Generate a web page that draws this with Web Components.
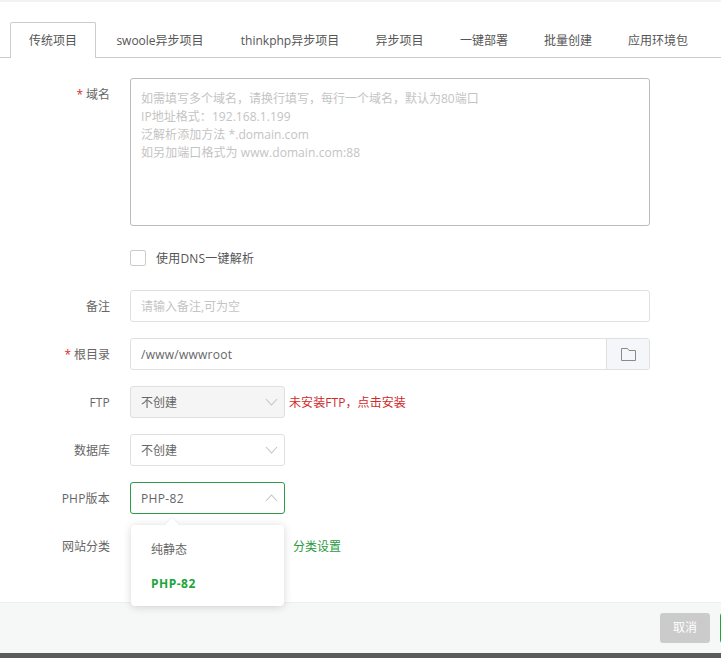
<!DOCTYPE html>
<html lang="zh">
<head>
<meta charset="utf-8">
<title>添加站点</title>
<style>
    html, body { margin: 0; height: 100%; }
    body {
        background: #fff;
        color: #666;
        font: 12px "Open Sans", "Noto Sans CJK SC", sans-serif;
        overflow: hidden;
    }
</style>
</head>
<body>
<site-dialog>
    <tab-bar>
        <tab-item active>传统项目</tab-item>
        <tab-item width="128">swoole异步项目</tab-item>
        <tab-item width="132">thinkphp异步项目</tab-item>
        <tab-item width="87">异步项目</tab-item>
        <tab-item width="82">一键部署</tab-item>
        <tab-item width="86">批量创建</tab-item>
        <tab-item width="94">应用环境包</tab-item>
    </tab-bar>
    <site-form>
        <form-row label="域名" required height="148">
            <text-area-box>
                <div>如需填写多个域名，请换行填写，每行一个域名，默认为80端口</div>
                <div style="letter-spacing:.05px">IP地址格式：192.168.1.199</div>
                <div style="letter-spacing:.05px">泛解析添加方法 *.domain.com</div>
                <div style="letter-spacing:.08px">如另加端口格式为 www.domain.com:88</div>
            </text-area-box>
        </form-row>
        <form-row height="16" gap="24"><check-box>使用DNS一键解析</check-box></form-row>
        <form-row label="备注" gap="24"><text-box placeholder>请输入备注,可为空</text-box></form-row>
        <form-row label="根目录" required gap="16"><text-box folder style="letter-spacing:.25px">/www/wwwroot</text-box></form-row>
        <form-row label="FTP" tracking gap="16">
            <select-box disabled>不创建</select-box>
            <span slot="after" style="color:#cf2a2a;margin-left:4px;letter-spacing:.08px">未安装FTP，点击安装</span>
        </form-row>
        <form-row label="数据库" gap="16"><select-box>不创建</select-box></form-row>
        <form-row label="PHP版本" tracking gap="16">
            <select-box open><span style="letter-spacing:.35px">PHP-82</span>
                <select-menu slot="menu">
                    <menu-option>纯静态</menu-option>
                    <menu-option selected>PHP-82</menu-option>
                </select-menu>
            </select-box>
        </form-row>
        <form-row label="网站分类" gap="16">
            <span style="display:block;width:155px"></span>
            <span slot="after" style="color:#2a9a42;margin-left:8px">分类设置</span>
        </form-row>
    </site-form>
    <dialog-footer slot="footer">
        <foot-button>取消</foot-button>
        <foot-button primary></foot-button>
    </dialog-footer>
</site-dialog>

<script>
class SiteDialog extends HTMLElement {
    constructor() {
        super();
        this.attachShadow({ mode: 'open' });
        this.shadowRoot.innerHTML = `
            <style>
                :host {
                    display: flex;
                    flex-direction: column;
                    width: 721px;
                    height: 658px;
                    box-sizing: border-box;
                    border-top: 2px solid #f3f3f3;
                    border-bottom: 5px solid #5a5a5a;
                }
                .body { flex: 1; min-height: 0; }
            </style>
            <div class="body"><slot></slot></div>
            <slot name="footer"></slot>
        `;
    }
}

class TabBar extends HTMLElement {
    constructor() {
        super();
        this.attachShadow({ mode: 'open' });
        this.shadowRoot.innerHTML = `
            <style>
                :host {
                    display: flex;
                    height: 35px;
                    margin-top: 20px;
                    padding-left: 10px;
                    border-bottom: 1px solid #ccc;
                }
            </style>
            <slot></slot>
        `;
    }
}

class TabItem extends HTMLElement {
    constructor() {
        super();
        this.attachShadow({ mode: 'open' });
        this.shadowRoot.innerHTML = `
            <style>
                :host {
                    display: block;
                    box-sizing: border-box;
                    flex: none;
                    height: 35px;
                    line-height: 35px;
                    text-align: center;
                    color: #555;
                    border: 1px solid transparent;
                    border-bottom: 0;
                }
                :host([active]) {
                    width: 86px;
                    height: 36px;
                    background: #fff;
                    border-color: #ccc;
                    border-radius: 2px 2px 0 0;
                }
            </style>
            <slot></slot>
        `;
    }
    connectedCallback() {
        if (this.hasAttribute('width')) this.style.width = this.getAttribute('width') + 'px';
    }
}

class SiteForm extends HTMLElement {
    constructor() {
        super();
        this.attachShadow({ mode: 'open' });
        this.shadowRoot.innerHTML = `
            <style>
                :host { display: block; padding-top: 20px; position: relative; }
            </style>
            <slot></slot>
        `;
    }
}

class FormRow extends HTMLElement {
    constructor() {
        super();
        this.attachShadow({ mode: 'open' });
        this.shadowRoot.innerHTML = `
            <style>
                :host { display: flex; align-items: flex-start; height: 32px; }
                .label {
                    flex: none;
                    box-sizing: border-box;
                    width: 110px;
                    margin-right: 20px;
                    line-height: 34px;
                    text-align: right;
                    color: #666;
                }
                .label b { color: #e0282c; font-weight: normal; margin-right: 3px; }
                .control { flex: none; }
                .after { line-height: 34px; display: block; }
            </style>
            <div class="label"></div>
            <div class="control"><slot></slot></div>
            <div class="after"><slot name="after"></slot></div>
        `;
    }
    connectedCallback() {
        const label = this.shadowRoot.querySelector('.label');
        const text = this.getAttribute('label') || '';
        label.innerHTML = (this.hasAttribute('required') ? '<b>*</b>' : '') + text;
        if (this.hasAttribute('tracking')) label.style.letterSpacing = '.2px';
        if (this.hasAttribute('height')) this.style.height = this.getAttribute('height') + 'px';
        if (this.hasAttribute('gap')) this.style.marginTop = this.getAttribute('gap') + 'px';
    }
}

class TextAreaBox extends HTMLElement {
    constructor() {
        super();
        this.attachShadow({ mode: 'open' });
        this.shadowRoot.innerHTML = `
            <style>
                :host {
                    display: block;
                    box-sizing: border-box;
                    width: 520px;
                    height: 148px;
                    padding: 11px 10px 5px;
                    border: 1px solid #bbb;
                    border-radius: 3px;
                    line-height: 18px;
                    color: #c4c4c4;
                }
            </style>
            <slot></slot>
        `;
    }
}

class CheckBox extends HTMLElement {
    constructor() {
        super();
        this.attachShadow({ mode: 'open' });
        this.shadowRoot.innerHTML = `
            <style>
                :host { display: flex; align-items: center; height: 16px; line-height: 16px; color: #555; }
                i {
                    display: block;
                    box-sizing: border-box;
                    width: 16px;
                    height: 16px;
                    margin-right: 10px;
                    border: 1px solid #ccc;
                    border-radius: 2px;
                }
                span { padding-top: 2px; letter-spacing: .2px; }
            </style>
            <i></i><span><slot></slot></span>
        `;
    }
}

class TextBox extends HTMLElement {
    constructor() {
        super();
        this.attachShadow({ mode: 'open' });
        this.shadowRoot.innerHTML = `
            <style>
                :host {
                    display: flex;
                    box-sizing: border-box;
                    width: 520px;
                    height: 32px;
                    border: 1px solid #e0e0e0;
                    border-radius: 3px;
                    line-height: 32px;
                    color: #666;
                    overflow: hidden;
                }
                :host([placeholder]) { color: #c4c4c4; }
                .text { flex: 1; padding-left: 10px; }
                .btn {
                    display: none;
                    flex: none;
                    width: 42px;
                    background: #f5f6fa;
                    border-left: 1px solid #e0e0e0;
                    align-items: center;
                    justify-content: center;
                }
                :host([folder]) .btn { display: flex; }
            </style>
            <div class="text"><slot></slot></div>
            <div class="btn">
                <svg width="15" height="13" viewBox="0 0 15 13" fill="none" stroke="#8a8a8a" stroke-width="1">
                    <path d="M.5 12.500V.5h6l1.500 2h6.500v10z"/>
                </svg>
            </div>
        `;
    }
}

class SelectBox extends HTMLElement {
    constructor() {
        super();
        this.attachShadow({ mode: 'open' });
        this.shadowRoot.innerHTML = `
            <style>
                :host {
                    display: block;
                    position: relative;
                    box-sizing: border-box;
                    width: 155px;
                    height: 32px;
                    padding-left: 10px;
                    border: 1px solid #e0e0e0;
                    border-radius: 3px;
                    line-height: 32px;
                    color: #666;
                }
                :host([disabled]) { background: #f5f5f5; }
                :host([open]) { border-color: #2f9a48; }
                svg { position: absolute; right: 6px; top: 11px; }
                :host([open]) svg { transform: rotate(180deg); }
            </style>
            <slot></slot>
            <svg width="13" height="8" viewBox="0 0 13 8" fill="none" stroke="#c0c4cc" stroke-width="1.100">
                <path d="M1 1l5.500 6L12 1"/>
            </svg>
            <slot name="menu"></slot>
        `;
    }
}

class SelectMenu extends HTMLElement {
    constructor() {
        super();
        this.attachShadow({ mode: 'open' });
        this.shadowRoot.innerHTML = `
            <style>
                :host {
                    display: block;
                    position: absolute;
                    left: 0;
                    top: 42px;
                    z-index: 5;
                    box-sizing: border-box;
                    width: 153px;
                    height: 81px;
                    padding: 8px 0 6px;
                    background: #fff;
                    border-radius: 4px;
                    box-shadow: 0 1px 8px rgba(0,0,0,.16);
                }
                .arrow {
                    position: absolute;
                    left: 36px;
                    top: -5px;
                    width: 10px;
                    height: 10px;
                    background: #fff;
                    transform: rotate(45deg);
                    box-shadow: -1px -1px 2px rgba(0,0,0,.05);
                }
            </style>
            <div class="arrow"></div>
            <slot></slot>
        `;
    }
}

class MenuOption extends HTMLElement {
    constructor() {
        super();
        this.attachShadow({ mode: 'open' });
        this.shadowRoot.innerHTML = `
            <style>
                :host {
                    display: block;
                    position: relative;
                    height: 33px;
                    line-height: 33px;
                    padding-left: 20px;
                    color: #666;
                }
                :host([selected]) { color: #20a53a; font-weight: 700; letter-spacing: .5px; margin-top: 1px; }
            </style>
            <slot></slot>
        `;
    }
}

class DialogFooter extends HTMLElement {
    constructor() {
        super();
        this.attachShadow({ mode: 'open' });
        this.shadowRoot.innerHTML = `
            <style>
                :host {
                    display: flex;
                    align-items: center;
                    gap: 10px;
                    box-sizing: border-box;
                    height: 51px;
                    padding-left: 660px;
                    background: #f6f8f8;
                    border-top: 1px solid #eee;
                    overflow: hidden;
                }
            </style>
            <slot></slot>
        `;
    }
}

class FootButton extends HTMLElement {
    constructor() {
        super();
        this.attachShadow({ mode: 'open' });
        this.shadowRoot.innerHTML = `
            <style>
                :host {
                    display: block;
                    flex: none;
                    width: 50px;
                    height: 30px;
                    line-height: 30px;
                    text-align: center;
                    color: #fff;
                    background: #cbcbcb;
                    border-radius: 3px;
                }
                :host([primary]) { background: #20a53a; }
            </style>
            <slot></slot>
        `;
    }
}

customElements.define('site-dialog', SiteDialog);
customElements.define('tab-bar', TabBar);
customElements.define('tab-item', TabItem);
customElements.define('site-form', SiteForm);
customElements.define('form-row', FormRow);
customElements.define('text-area-box', TextAreaBox);
customElements.define('check-box', CheckBox);
customElements.define('text-box', TextBox);
customElements.define('select-box', SelectBox);
customElements.define('select-menu', SelectMenu);
customElements.define('menu-option', MenuOption);
customElements.define('dialog-footer', DialogFooter);
customElements.define('foot-button', FootButton);
</script>
</body>
</html>
